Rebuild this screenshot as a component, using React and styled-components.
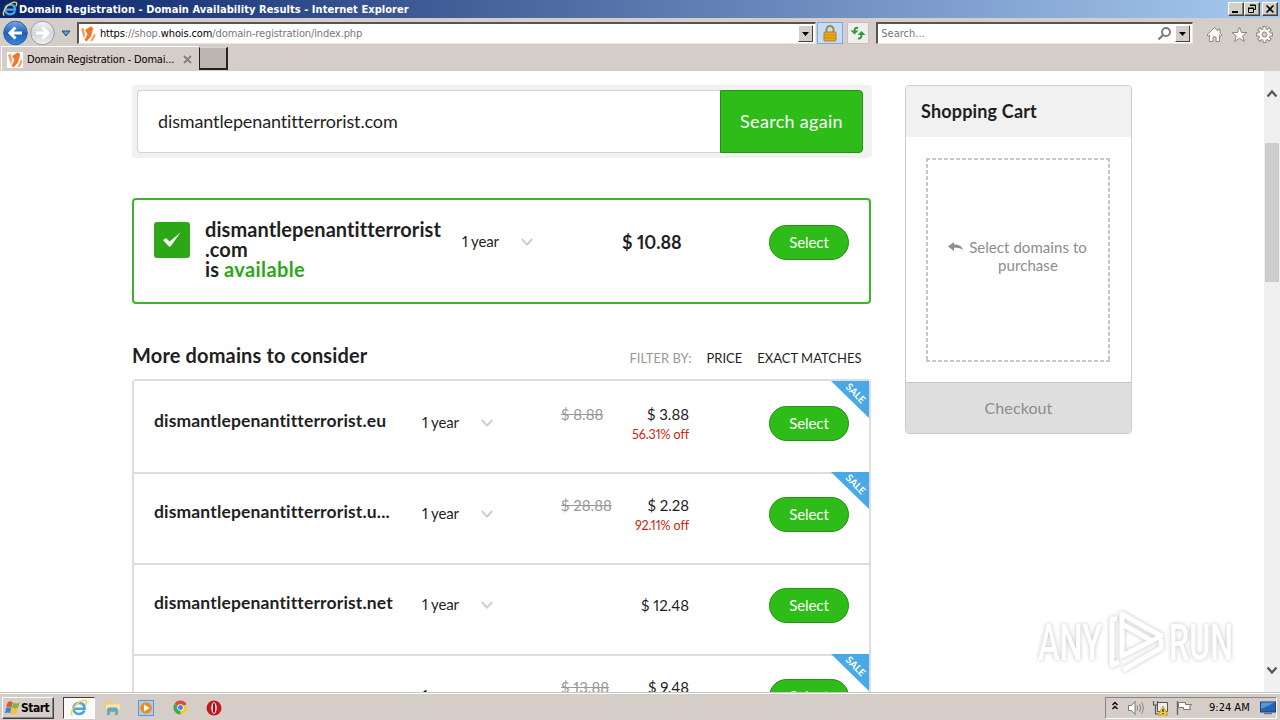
import styled, { createGlobalStyle, css } from "styled-components";

const GlobalStyle = createGlobalStyle`
  * {
    box-sizing: border-box;
  }
  body {
    margin: 0;
    width: 1280px;
    height: 720px;
    overflow: hidden;
    background: #fff;
  }
`;

const uiFont = '"DejaVu Sans Condensed", "DejaVu Sans", sans-serif';
const siteFont = 'Lato, "Open Sans", sans-serif';

const Screen = styled.div`
  width: 1280px;
  height: 720px;
  display: flex;
  flex-direction: column;
  overflow: hidden;
  position: relative;
  font-family: ${uiFont};
`;

const TitleBar = styled.header`
  height: 18px;
  flex: none;
  display: flex;
  align-items: center;
  padding: 0 2px;
  background: linear-gradient(90deg, #0a246a 0%, #a6caf0 100%);
`;

const TitleText = styled.span`
  margin-left: 1px;
  flex: 1;
  color: #fff;
  font-size: 11px;
  font-weight: bold;
  white-space: nowrap;
  letter-spacing: 0.06px;
`;

const WindowButton = styled.span`
  width: 16px;
  height: 14px;
  display: flex;
  background: #d4d0c8;
  border: 1px solid;
  border-color: #fff #404040 #404040 #fff;
  box-shadow: inset -1px -1px 0 #808080;
  margin-left: ${(p) => p.$gap || 0}px;
`;

const NavBar = styled.div`
  height: 28px;
  flex: none;
  display: flex;
  align-items: center;
  padding: 2px 7px 0 2px;
  background: #d5cec8;
`;

const ToolDrop = styled.span`
  width: 19px;
  display: flex;
  justify-content: center;
  margin-left: 2px;
  padding-right: 3px;
`;

const Field = styled.div`
  width: ${(p) => p.$width}px;
  height: 22px;
  margin-left: ${(p) => p.$gap}px;
  padding: 0 2px 0 ${(p) => p.$pad}px;
  display: flex;
  align-items: center;
  background: #fff;
  border: 1px solid;
  border-width: 2px 1px 1px 2px;
  border-color: #5a5450 #e9e5e1 #e9e5e1 #5a5450;
`;

const FieldText = styled.span`
  flex: 1;
  margin-left: ${(p) => p.$gap || 0}px;
  font-size: 11px;
  line-height: 16px;
  white-space: nowrap;
  color: #777;
  letter-spacing: ${(p) => p.$spacing || 0}px;

  b {
    color: #000;
    font-weight: normal;
  }
`;

const DropButton = styled.span`
  width: 15px;
  height: 17px;
  display: flex;
  align-items: center;
  justify-content: center;
  background: #d5cec8;
  border: 1px solid;
  border-color: #fff #404040 #404040 #fff;
`;

const ToolButton = styled.span`
  width: ${(p) => p.$width}px;
  height: 22px;
  margin-left: ${(p) => p.$gap}px;
  display: flex;
  align-items: center;
  justify-content: center;
  border: 1px solid ${(p) => (p.$active ? "#7fa9dd" : "#c4c0bc")};
  background: ${(p) => (p.$active ? "#c4dcf8" : "#f0eeec")};
`;

const NavIcons = styled.div`
  margin-left: 13px;
  display: flex;
  gap: 8px;
  padding-top: 3px;
`;

const TabRow = styled.div`
  height: 25px;
  flex: none;
  display: flex;
  background: #d5cec8;
`;

const Tab = styled.div`
  width: 197px;
  margin-left: 1px;
  padding: 1px 0 0 5px;
  display: flex;
  align-items: center;
  border-top: 1px solid #fff;
  border-left: 1px solid #fff;
  font-size: 11px;
  white-space: nowrap;
`;

const TabLabel = styled.span`
  width: 156px;
  margin-left: 4px;
  letter-spacing: -0.18px;
`;

const NewTab = styled.div`
  width: 29px;
  height: 23px;
  margin: 1px 0 0 1px;
  background: #bdb5b0;
  border: 1px solid;
  border-width: 1px 2px 2px 1px;
  border-color: #d8d4d0 #222 #222 #222;
`;

const Viewport = styled.div`
  height: 621px;
  flex: none;
  display: flex;
  background: #fff;
  overflow: hidden;
`;

const Page = styled.main`
  width: 1264px;
  padding: 14px 0 0 132px;
  display: flex;
  align-items: flex-start;
  gap: 33px;
  font-family: ${siteFont};
  font-variant-ligatures: none;
  font-variant-numeric: proportional-nums;
  color: #1f1f1f;
`;

const MainColumn = styled.section`
  width: 740px;
`;

const SearchBox = styled.div`
  height: 73px;
  padding: 5px 9px 5px 5px;
  display: flex;
  background: #f1f1f1;
  border-radius: 4px;
`;

const SearchInput = styled.div`
  flex: 1;
  padding-left: 20px;
  line-height: 60px;
  font-size: 18px;
  background: #fff;
  border: 1px solid #d4d4d4;
  border-right: none;
  border-radius: 4px 0 0 4px;
  letter-spacing: -0.13px;
`;

const SearchButton = styled.div`
  width: 143px;
  line-height: 60px;
  text-align: center;
  font-size: 18px;
  color: #fff;
  background: #2ebd18;
  border: 1px solid #219410;
  border-radius: 0 4px 4px 0;
  letter-spacing: 0.3px;
`;

const ResultCard = styled.div`
  width: 739px;
  height: 106px;
  margin-top: 40px;
  padding-left: 20px;
  display: flex;
  border: 2px solid #3db32b;
  border-radius: 4px;
`;

const CheckBadge = styled.div`
  width: 36px;
  height: 36px;
  margin-top: 22px;
  display: flex;
  align-items: center;
  justify-content: center;
  background: #2ca716;
  border-radius: 3px;
`;

const ResultName = styled.div`
  width: 257px;
  margin: 19px 0 0 15px;
  font-size: 20px;
  font-weight: bold;
  letter-spacing: 0.08px;
  white-space: nowrap;
`;

const NameLine = styled.div`
  height: 20px;
  line-height: 20px;
`;

const Available = styled.span`
  color: #2ca716;
  letter-spacing: 0.4px;
`;

const Period = styled.div`
  width: ${(p) => p.$width}px;
  height: 20px;
  margin-top: ${(p) => p.$top}px;
  display: flex;
  align-items: center;
  gap: 20px;
  font-size: 15px;
  line-height: 18px;
  white-space: nowrap;
`;

const PeriodText = styled.span`
  width: 39px;
  height: 20px;
  letter-spacing: -0.15px;
`;

const ResultPrice = styled.div`
  width: 147px;
  margin-top: 32px;
  font-size: 18px;
  line-height: 20px;
  font-weight: bold;
`;

const SelectButton = styled.div`
  width: 80px;
  height: 35px;
  flex: none;
  margin-top: ${(p) => p.$top}px;
  line-height: 32px;
  text-align: center;
  font-size: 15px;
  letter-spacing: -0.1px;
  color: #fff;
  background: #2ebd18;
  border: 1px solid #219410;
  border-radius: 18px;
`;

const ListHeader = styled.div`
  height: 75px;
  padding: 39px 10.5px 0 0;
  display: flex;
  align-items: baseline;
`;

const ListTitle = styled.h2`
  margin: 0;
  flex: 1;
  font-size: 20px;
  line-height: 24px;
  font-weight: bold;
  letter-spacing: 0.15px;
`;

const FilterItem = styled.span`
  margin-left: 15px;
  font-size: 13px;
  color: ${(p) => (p.$muted ? "#999" : "#1f1f1f")};
`;

const DomainList = styled.div`
  width: 739px;
  border: 2px solid #ddd;
  border-radius: 4px 4px 0 0;
`;

const DomainRow = styled.div`
  height: 91px;
  padding: 0 20px;
  display: flex;
  position: relative;
  border-top: 2px solid #ddd;

  &:first-child {
    border-top-color: #fff;
  }
`;

const DomainName = styled.div`
  width: 268px;
  margin-top: 28px;
  font-size: 17.5px;
  line-height: 20px;
  font-weight: bold;
  white-space: nowrap;
  letter-spacing: 0.15px;
`;

const PriceBlock = styled.div`
  width: 128px;
  margin: ${(p) => (p.$single ? 30 : 21)}px 80px 0 0;
  display: grid;
  grid-template-columns: 1fr auto;
  grid-auto-rows: 20px;
  font-size: 15px;
  line-height: 20px;
`;

const OldPrice = styled.span`
  color: #999;
  text-decoration: line-through;
`;

const Discount = styled.span`
  grid-column: 1 / 3;
  text-align: right;
  font-size: 12.5px;
  line-height: 22px;
  letter-spacing: -0.1px;
  color: #cb1f0e;
`;

const Ribbon = styled.div`
  position: absolute;
  top: -2px;
  right: 0;
  width: 38px;
  height: 37px;
  background: #48a9e6;
  clip-path: polygon(0 0, 100% 0, 100% 100%);
`;

const RibbonText = styled.span`
  position: absolute;
  left: 10px;
  top: 5px;
  width: 30px;
  text-align: center;
  font-size: 10px;
  line-height: 14px;
  font-weight: bold;
  color: #fff;
  transform: rotate(45deg);
`;

const Cart = styled.aside`
  width: 227px;
  height: 349px;
  display: flex;
  flex-direction: column;
  border: 1px solid #ccc;
  border-radius: 4px;
  overflow: hidden;
`;

const CartTitle = styled.div`
  height: 51px;
  padding-left: 15px;
  line-height: 51px;
  font-size: 18px;
  font-weight: bold;
  background: #f1f1f1;
  letter-spacing: 0.17px;
`;

const CartBody = styled.div`
  flex: 1;
  padding: 21px 21px 20px 20px;
  display: flex;
`;

/* short 4px dashes, finer than the ones border-style: dashed gives */
const CartEmpty = styled.div`
  --dash: #c8c8c8 0 4px, transparent 4px 6px;
  flex: 1;
  display: flex;
  justify-content: center;
  padding-top: 80px;
  background: repeating-linear-gradient(90deg, var(--dash)) 0 0 / 100% 2px no-repeat,
    repeating-linear-gradient(90deg, var(--dash)) 0 100% / 100% 2px no-repeat,
    repeating-linear-gradient(180deg, var(--dash)) 0 0 / 2px 100% no-repeat,
    repeating-linear-gradient(180deg, var(--dash)) 100% 0 / 2px 100% no-repeat;
  color: #8d8d8d;
  font-size: 15px;
  line-height: 18px;
  text-align: center;

  svg {
    margin-top: 4px;
  }
`;

const CartHint = styled.div`
  width: 118px;
  margin: 0 1px 0 6px;
  white-space: nowrap;
  letter-spacing: 0.06px;
`;

const Checkout = styled.div`
  height: 51px;
  line-height: 50px;
  text-align: center;
  font-size: 16px;
  color: #8d8d8d;
  background: #dedede;
  border-top: 1px solid #c4c4c4;
  letter-spacing: 0.1px;
`;

const Scrollbar = styled.div`
  width: 16px;
  display: flex;
  flex-direction: column;
  align-items: center;
  background: #f0f0f0;
`;

const ScrollArrow = styled.div`
  height: 44px;
  display: flex;
  align-items: center;
  margin-bottom: ${(p) => (p.$up ? 28 : 0)}px;
  margin-top: ${(p) => (p.$up ? 0 : 366)}px;
`;

const ScrollThumb = styled.div`
  width: 14px;
  height: 139px;
  flex: none;
  background: #cdcdcd;
`;

const Watermark = styled.svg`
  position: absolute;
  left: 1030px;
  top: 602px;
  filter: drop-shadow(0 0 2px rgba(0, 0, 0, 0.24));
`;

const Taskbar = styled.footer`
  height: 28px;
  flex: none;
  display: flex;
  align-items: center;
  padding: 2px 3px 0 2px;
  background: #d5cec8;
  border-top: 1px solid #c9c4bd;
  box-shadow: inset 0 1px 0 #fff;
`;

const bevel = css`
  border: 1px solid;
  border-color: #fff #404040 #404040 #fff;
  box-shadow: inset -1px -1px 0 #8a8580;
`;

const StartButton = styled.div`
  width: 52px;
  height: 22px;
  padding-left: 2px;
  display: flex;
  align-items: center;
  gap: 1px;
  font-size: 12px;
  font-weight: bold;
  letter-spacing: -0.5px;
  ${bevel}
`;

const TaskItem = styled.div`
  width: ${(p) => (p.$active ? 32 : 34)}px;
  height: 22px;
  margin-left: ${(p) => (p.$active ? 9 : 0)}px;
  display: flex;
  align-items: center;
  justify-content: center;
  ${(p) =>
    p.$active &&
    css`
      background: #fbfaf9;
      border: 1px solid;
      border-color: #404040 #fff #fff #404040;
    `}
`;

const Tray = styled.div`
  width: 172px;
  height: 22px;
  margin-left: auto;
  padding-left: 5px;
  display: flex;
  align-items: center;
  border: 1px solid;
  border-color: #8a8580 #fff #fff #8a8580;
  font-size: 11px;
`;

const TrayIcons = styled.div`
  width: 98px;
  display: flex;
  align-items: center;
`;

const Clock = styled.span`
  width: 51px;
  white-space: nowrap;
`;

const IeIcon = ({ size }) => (
  <svg width={size} height={size} viewBox="0 0 18 18" fill="none">
    <path d="M14.500 11.500C13.400 14 11.500 15 9 15 5.700 15 3.500 12.600 3.500 9.500S5.800 4 9 4c3.400 0 5.600 2.200 5.600 5.800H5" stroke="#49a5e6" strokeWidth="2.600" />
    <path d="M2.500 16.500C-.5 14 4 6 9.500 3c3-1.700 6.500-2.500 7-.5.3 1-.2 2.200-1 3.500" stroke="#f1d256" strokeWidth="1.500" />
  </svg>
);

const SiteIcon = () => (
  <svg width="16" height="16" viewBox="0 0 16 16">
    <rect width="16" height="16" fill="#fff" />
    <path d="M1 3l2.500-1.500L5 8l-1 5z" fill="#f0a06a" />
    <path d="M5 4L10.500.5q2.500 0 2.500 3l-2 7-4.500 5L4.500 14l3-6z" fill="#f0772a" />
    <path d="M14.500 7l1 3-2.500 4.500-3 1z" fill="#f0a06a" />
  </svg>
);

const NavArrow = ({ forward }) => (
  <svg width="27" height="26" viewBox="0 0 26 26">
    <defs>
      <linearGradient id={forward ? "fwd" : "bck"} x1="0" y1="0" x2="0" y2="1">
        <stop offset="0" stopColor={forward ? "#f2f3f5" : "#79aae4"} />
        <stop offset=".5" stopColor={forward ? "#d2d5da" : "#1c5fb9"} />
        <stop offset="1" stopColor={forward ? "#eef0f3" : "#2f8be0"} />
      </linearGradient>
    </defs>
    <circle cx="13" cy="13" r="11.800" fill={`url(#${forward ? "fwd" : "bck"})`} stroke={forward ? "#9a9da3" : "#3a5f92"} />
    <path
      d={forward ? "M6.500 13h11M13 7.500l5.500 5.500-5.500 5.500" : "M19.500 13h-11M13 7.500L7.500 13l5.500 5.500"}
      stroke="#fff"
      strokeWidth="3"
      fill="none"
    />
  </svg>
);

const Triangle = () => (
  <svg width="7" height="4" viewBox="0 0 7 4">
    <path d="M0 0h7L3.500 4z" />
  </svg>
);

const DropArrow = () => (
  <svg width="10" height="7" viewBox="0 0 10 7">
    <path d="M1 1h8L5 6z" fill="#5e9fd0" stroke="#1f4e79" />
  </svg>
);

const LockIcon = () => (
  <svg width="14" height="17" viewBox="0 0 14 17">
    <path d="M3.500 8V4.500a3.500 3.500 0 0 1 7 0V8" fill="none" stroke="#a88a3c" strokeWidth="2" />
    <rect x="1" y="7" width="12" height="9" rx="1" fill="#eaa91e" stroke="#b57c10" />
    <path d="M1.500 10h11M1.500 13h11" stroke="#c98a12" />
  </svg>
);

const RefreshIcon = () => (
  <svg width="16" height="16" viewBox="0 0 16 16" fill="none" stroke="#2f9a3a" strokeWidth="2">
    <path d="M8 3C5.500 2 4.500 4 4.500 6M8 13.500c3 .5 3.500-2 3.500-4" />
    <path d="M.5 5.500h8L4.500 9.500zM7.500 10h8L11.500 6z" fill="#2f9a3a" stroke="none" />
  </svg>
);

const SearchIcon = () => (
  <svg width="18" height="16" viewBox="0 0 18 16" fill="none" stroke="#777" strokeWidth="1.800">
    <circle cx="9" cy="6" r="4" />
    <path d="M6 9L1.500 13.500" strokeWidth="2.200" />
  </svg>
);

const outline = { fill: "#fff", stroke: "#8d8883", strokeWidth: 1 };

const HomeIcon = () => (
  <svg width="17" height="17" viewBox="0 0 17 17">
    <path d="M8.500 1.500L1 9l1.300 1L3.500 9v6.500h3.500V11h3v4.500h3.500V9l1.200 1L16 9l-2-2V3h-2v2z" {...outline} />
  </svg>
);

const StarIcon = () => (
  <svg width="17" height="17" viewBox="0 0 17 17">
    <path d="M8.500 1l2 5.500H16l-4.400 3.400 1.700 5.600-4.800-3.300-4.800 3.300 1.700-5.600L1 6.500h5.500z" {...outline} />
  </svg>
);

const gearTeeth = [0, 45, 90, 135, 180, 225, 270, 315];

const GearIcon = () => (
  <svg width="17" height="17" viewBox="0 0 17 17">
    {gearTeeth.map((angle) => (
      <rect key={angle} x="7" y=".5" width="3" height="4" transform={`rotate(${angle} 8.500 8.500)`} {...outline} />
    ))}
    <circle cx="8.500" cy="8.500" r="5.200" fill="#fff" />
    <circle cx="8.500" cy="8.500" r="2.500" fill="#d5cec8" stroke="#8d8883" />
  </svg>
);

const Chevron = () => (
  <svg width="12" height="8" viewBox="0 0 12 8" fill="none" stroke="#cfcfcf" strokeWidth="2">
    <path d="M.7 1L6 6.500 11.300 1" />
  </svg>
);

const CheckIcon = () => (
  <svg width="20" height="16" viewBox="0 0 20 16">
    <path d="M1 8l3-2L7.500 9.500 18.500.5 8.500 14.500H7z" fill="#fff" />
  </svg>
);

const ReplyIcon = () => (
  <svg width="15" height="10" viewBox="0 0 15 10">
    <path d="M0 4.500L6 0v2.600c5 0 8 1.800 9 5.400-2-1.800-5-2.300-9-2.200V9z" fill="#8d8d8d" />
  </svg>
);

const ScrollChevron = ({ down }) => (
  <svg width="12" height="9" viewBox="0 0 12 9" fill="none" stroke="#555" strokeWidth="2.200">
    <path d={down ? "M1.500 1.500L6 6.500l4.500-5" : "M1.500 7.500L6 2.500l4.500 5"} />
  </svg>
);

const WindowsIcon = () => (
  <svg width="15" height="16" viewBox="0 0 15 16">
    <path d="M2.500 2.500c2-1.500 3.500-1.500 5.300-.3L6.500 7.500c-1.500-1-3.300-1-5.300.2z" fill="#e4572b" />
    <path d="M8.300 2.700c2 1 4 1 6.200-.5L13.200 7.500c-2 1.300-4 1.300-6.200.3z" fill="#7eb53c" />
    <path d="M1 8.300c2-1.200 3.700-1.200 5.300-.2L5 13.500c-1.500-1.200-3-1.200-5 0z" fill="#3f83c9" />
    <path d="M6.800 8.500c2.200 1 4.200 1 6.300-.3l-1.400 5.300c-2 1.300-4 1.300-6.200.2z" fill="#f5c034" />
  </svg>
);

const FolderIcon = () => (
  <svg width="17" height="17" viewBox="0 0 16 16">
    <path d="M1 2h5l1 2h7v9H1z" fill="#e8cf74" />
    <path d="M2 5h13v5H2z" fill="#f6e6a6" />
    <path d="M3 15V9.500Q3 8 5 8h6q2 0 2 1.500V15h-2.500v-3h-5v3z" fill="#5ea6cf" />
  </svg>
);

const PlayerIcon = () => (
  <svg width="16" height="16" viewBox="0 0 16 16">
    <rect x=".5" y=".5" width="15" height="15" fill="#a9cdec" stroke="#5c96cb" />
    <circle cx="8" cy="8" r="5.800" fill="#f08a1d" />
    <path d="M6 4.500L11.500 8 6 11.500z" fill="#fff" />
  </svg>
);

const ChromeIcon = () => (
  <svg width="15" height="15" viewBox="0 0 16 16">
    <path d="M8 8L1.500 4.200A7.500 7.500 0 0 1 14.500 4.500z" fill="#df4a3a" />
    <path d="M8 8l6.500-3.500A7.500 7.500 0 0 1 8 15.500z" fill="#f6cb3a" />
    <path d="M8 8v7.500A7.500 7.500 0 0 1 1.500 4.200z" fill="#3fa757" />
    <circle cx="8" cy="8" r="3.500" fill="#fff" />
    <circle cx="8" cy="8" r="2.700" fill="#4a85d8" />
  </svg>
);

const OperaIcon = () => (
  <svg width="16" height="16" viewBox="0 0 16 16">
    <circle cx="8" cy="8" r="7.500" fill="#c01a20" />
    <ellipse cx="8" cy="8" rx="2.700" ry="5.700" fill="#fff" />
    <ellipse cx="8" cy="8" rx="1.300" ry="5" fill="#a01016" />
  </svg>
);

const TrayGlyphs = () => (
  <svg width="90" height="20" viewBox="0 0 90 20" fill="none">
    <path d="M1.500 7L4 4.500 6.500 7M1.500 11L4 8.500 6.500 11" stroke="#000" strokeWidth="1.400" />
    <path d="M17.500 7.500h3l3.500-4v13l-3.500-4h-3z" fill="#fff" stroke="#777" />
    <path d="M26 7.500q1.500 2.500 0 5M28.500 6q2.500 4 0 8M31 4.500q3 5.500 0 11" stroke="#888" />
    <path d="M46.500 4.500h10v9h-10z" fill="#eee" stroke="#555" />
    <path d="M42.500 3v4h4V3M44.500 7v9h5" stroke="#555" strokeWidth="1.200" />
    <path d="M52 8l5 9H47z" fill="#f5cb2d" stroke="#b48c11" strokeWidth=".7" />
    <path d="M52 11v3M52 15v1" stroke="#222" strokeWidth="1.200" />
    <path d="M66.500 3v14" stroke="#666" strokeWidth="1.400" />
    <path d="M67.500 4.500h7v2h6l-2 2.500 1 2.500h-7v-2h-5z" fill="#fff" stroke="#777" />
  </svg>
);

const MonitorIcon = () => (
  <svg width="16" height="14" viewBox="0 0 16 14">
    <rect x=".5" y="1" width="15" height="10" fill="#2463b5" stroke="#164179" />
    <path d="M1 1.500h14L1 8z" fill="#5794dc" />
    <path d="M4 12.500h8" stroke="#6a7480" strokeWidth="1.500" />
  </svg>
);

const domains = [
  { name: "dismantlepenantitterrorist.eu", old: "$ 8.88", price: "$ 3.88", off: "56.31% off", sale: true },
  { name: "dismantlepenantitterrorist.u...", old: "$ 28.88", price: "$ 2.28", off: "92.11% off", sale: true },
  { name: "dismantlepenantitterrorist.net", price: "$ 12.48" },
  { old: "$ 13.88", price: "$ 9.48", sale: true },
];

const PeriodSelect = ({ width, top }) => (
  <Period $width={width} $top={top}>
    <PeriodText>1 year</PeriodText>
    <Chevron />
  </Period>
);

const Domain = ({ name, old, price, off, sale }) => (
  <DomainRow>
    <DomainName>{name}</DomainName>
    <PeriodSelect width={139} top={30} />
    <PriceBlock $single={!old}>
      <span>{old && <OldPrice>{old}</OldPrice>}</span>
      <span>{price}</span>
      {off && <Discount>{off}</Discount>}
    </PriceBlock>
    <SelectButton $top={23}>Select</SelectButton>
    {sale && (
      <Ribbon>
        <RibbonText>SALE</RibbonText>
      </Ribbon>
    )}
  </DomainRow>
);

const BrowserChrome = () => (
  <>
    <TitleBar>
      <IeIcon size={16} />
      <TitleText>Domain Registration - Domain Availability Results - Internet Explorer</TitleText>
      <WindowButton>
        <svg width="14" height="12"><path d="M3 9h6" stroke="#000" strokeWidth="2" /></svg>
      </WindowButton>
      <WindowButton>
        <svg width="14" height="12" fill="none" stroke="#000">
          <path d="M5 2h5.500v4.500H9M5 2.500h6M3 5.500h5.500v4H3.500v-4M3 5h6" />
        </svg>
      </WindowButton>
      <WindowButton $gap={2}>
        <svg width="14" height="12"><path d="M3.500 2.500l7 7M10.500 2.500l-7 7" stroke="#000" strokeWidth="1.600" /></svg>
      </WindowButton>
    </TitleBar>
    <NavBar>
      <NavArrow />
      <NavArrow forward />
      <ToolDrop>
        <DropArrow />
      </ToolDrop>
      <Field $width={740} $gap={0} $pad={1}>
        <SiteIcon />
        <FieldText $gap={4} $spacing={-0.12}>
          <b>https</b>://shop.<b>whois.com</b>/domain-registration/index.php
        </FieldText>
        <DropButton>
          <Triangle />
        </DropButton>
      </Field>
      <ToolButton $width={26} $gap={1} $active>
        <LockIcon />
      </ToolButton>
      <ToolButton $width={22} $gap={4}>
        <RefreshIcon />
      </ToolButton>
      <Field $width={317} $gap={7} $pad={3}>
        <FieldText>Search...</FieldText>
        <SearchIcon />
        <DropButton>
          <Triangle />
        </DropButton>
      </Field>
      <NavIcons>
        <HomeIcon />
        <StarIcon />
        <GearIcon />
      </NavIcons>
    </NavBar>
    <TabRow>
      <Tab>
        <SiteIcon />
        <TabLabel>Domain Registration - Domai...</TabLabel>
        <svg width="9" height="9"><path d="M1 1l7 7M8 1L1 8" stroke="#86807b" strokeWidth="1.800" /></svg>
      </Tab>
      <NewTab />
    </TabRow>
  </>
);

const App = () => (
  <Screen>
    <GlobalStyle />
    <BrowserChrome />
    <Viewport>
      <Page>
        <MainColumn>
          <SearchBox>
            <SearchInput>dismantlepenantitterrorist.com</SearchInput>
            <SearchButton>Search again</SearchButton>
          </SearchBox>
          <ResultCard>
            <CheckBadge>
              <CheckIcon />
            </CheckBadge>
            <ResultName>
              <NameLine>dismantlepenantitterrorist</NameLine>
              <NameLine>.com</NameLine>
              <NameLine>
                is <Available>available</Available>
              </NameLine>
            </ResultName>
            <PeriodSelect width={160} top={32} />
            <ResultPrice>$ 10.88</ResultPrice>
            <SelectButton $top={25}>Select</SelectButton>
          </ResultCard>
          <ListHeader>
            <ListTitle>More domains to consider</ListTitle>
            <FilterItem $muted>FILTER BY:</FilterItem>
            <FilterItem>PRICE</FilterItem>
            <FilterItem>EXACT MATCHES</FilterItem>
          </ListHeader>
          <DomainList>
            {domains.map((domain) => (
              <Domain key={domain.price} {...domain} />
            ))}
          </DomainList>
        </MainColumn>
        <Cart>
          <CartTitle>Shopping Cart</CartTitle>
          <CartBody>
            <CartEmpty>
              <ReplyIcon />
              <CartHint>
                Select domains to
                <br />
                purchase
              </CartHint>
            </CartEmpty>
          </CartBody>
          <Checkout>Checkout</Checkout>
        </Cart>
      </Page>
      <Scrollbar>
        <ScrollArrow $up>
          <ScrollChevron />
        </ScrollArrow>
        <ScrollThumb />
        <ScrollArrow>
          <ScrollChevron down />
        </ScrollArrow>
      </Scrollbar>
    </Viewport>
    <Watermark width="210" height="78" viewBox="0 0 210 78">
      <g fill="#fff" fontFamily="Roboto, sans-serif" fontSize="50" fontWeight="500">
        <text x="8" y="58" textLength="64" lengthAdjust="spacingAndGlyphs">ANY</text>
        <text x="139" y="58" textLength="64" lengthAdjust="spacingAndGlyphs">RUN</text>
      </g>
      <g fill="none" stroke="#fff" strokeWidth="5" strokeLinejoin="round">
        <path d="M92 12v42l39-20z" />
        <path d="M87 17h-5v46l7-3M93 68l38-22v-9M92 22l30 17" />
      </g>
    </Watermark>
    <Taskbar>
      <StartButton>
        <WindowsIcon />
        Start
      </StartButton>
      <TaskItem $active>
        <IeIcon size={18} />
      </TaskItem>
      <TaskItem>
        <FolderIcon />
      </TaskItem>
      <TaskItem>
        <PlayerIcon />
      </TaskItem>
      <TaskItem>
        <ChromeIcon />
      </TaskItem>
      <TaskItem>
        <OperaIcon />
      </TaskItem>
      <Tray>
        <TrayIcons>
          <TrayGlyphs />
        </TrayIcons>
        <Clock>9:24 AM</Clock>
        <MonitorIcon />
      </Tray>
    </Taskbar>
  </Screen>
);

export default App;
